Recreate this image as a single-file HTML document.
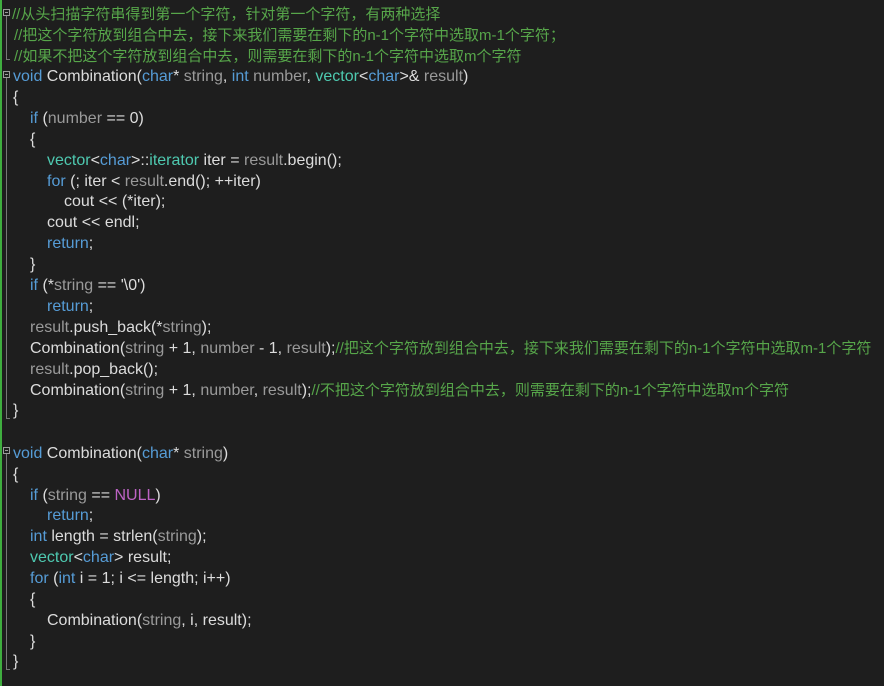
<!DOCTYPE html>
<html><head><meta charset="utf-8"><style>
body{margin:0;width:884px;height:686px;background:#1e1e1e;overflow:hidden;position:relative;font-family:"Liberation Sans","Noto Sans CJK SC",sans-serif;font-size:16px;color:#dcdcdc}
.g{position:absolute;left:0;top:0;width:2px;height:686px;background:#3fae3f}
.l{position:absolute;left:13px;white-space:pre;height:21px;line-height:21px;top:0}
.k{color:#569cd6}.c{color:#57a64a;font-size:15px}.p{color:#9a9a9a}.t{color:#4ec9b0}.m{color:#bd63c5}
.box{position:absolute;left:3px;width:7px;height:7px;border:1px solid #9a9a9a;box-sizing:border-box}
.box:after{content:"";position:absolute;left:1px;top:2px;width:3px;height:1px;background:#9a9a9a}
.v{position:absolute;left:6px;width:1px;background:#777}
.h{position:absolute;left:6px;width:4px;height:1px;background:#777}
</style></head><body>
<div class="g"></div>
<div class="box" style="top:9px"></div><div class="v" style="top:16px;height:44px"></div><div class="h" style="top:59px"></div>
<div class="box" style="top:71px"></div><div class="v" style="top:78px;height:341px"></div><div class="h" style="top:418px"></div>
<div class="box" style="top:447px"></div><div class="v" style="top:454px;height:216px"></div><div class="h" style="top:669px"></div>
<div class="l c" style="top:4px;left:12px">//从头扫描字符串得到第一个字符，针对第一个字符，有两种选择</div>
<div class="l c" style="top:25px;left:14px">//把这个字符放到组合中去，接下来我们需要在剩下的n-1个字符中选取m-1个字符；</div>
<div class="l c" style="top:46px;left:14px">//如果不把这个字符放到组合中去，则需要在剩下的n-1个字符中选取m个字符</div>
<div class="l" style="top:66px"><span class="k">void</span> Combination(<span class="k">char</span>* <span class="p">string</span>, <span class="k">int</span> <span class="p">number</span>, <span class="t">vector</span>&lt;<span class="k">char</span>&gt;&amp; <span class="p">result</span>)</div>
<div class="l" style="top:87px">{</div>
<div class="l" style="top:108px;left:30px"><span class="k">if</span> (<span class="p">number</span> == 0)</div>
<div class="l" style="top:129px;left:30px">{</div>
<div class="l" style="top:150px;left:47px"><span class="t">vector</span>&lt;<span class="k">char</span>&gt;::<span class="t">iterator</span> iter = <span class="p">result</span>.begin();</div>
<div class="l" style="top:171px;left:47px"><span class="k">for</span> (; iter &lt; <span class="p">result</span>.end(); ++iter)</div>
<div class="l" style="top:191px;left:64px">cout &lt;&lt; (*iter);</div>
<div class="l" style="top:212px;left:47px">cout &lt;&lt; endl;</div>
<div class="l" style="top:233px;left:47px"><span class="k">return</span>;</div>
<div class="l" style="top:254px;left:30px">}</div>
<div class="l" style="top:275px;left:30px"><span class="k">if</span> (*<span class="p">string</span> == '\0')</div>
<div class="l" style="top:296px;left:47px"><span class="k">return</span>;</div>
<div class="l" style="top:317px;left:30px"><span class="p">result</span>.push_back(*<span class="p">string</span>);</div>
<div class="l" style="top:338px;left:30px">Combination(<span class="p">string</span> + 1, <span class="p">number</span> - 1, <span class="p">result</span>);<span class="c">//把这个字符放到组合中去，接下来我们需要在剩下的n-1个字符中选取m-1个字符</span></div>
<div class="l" style="top:359px;left:30px"><span class="p">result</span>.pop_back();</div>
<div class="l" style="top:380px;left:30px">Combination(<span class="p">string</span> + 1, <span class="p">number</span>, <span class="p">result</span>);<span class="c">//不把这个字符放到组合中去，则需要在剩下的n-1个字符中选取m个字符</span></div>
<div class="l" style="top:400px">}</div>
<div class="l" style="top:443px"><span class="k">void</span> Combination(<span class="k">char</span>* <span class="p">string</span>)</div>
<div class="l" style="top:464px">{</div>
<div class="l" style="top:485px;left:30px"><span class="k">if</span> (<span class="p">string</span> == <span class="m">NULL</span>)</div>
<div class="l" style="top:505px;left:47px"><span class="k">return</span>;</div>
<div class="l" style="top:526px;left:30px"><span class="k">int</span> length = strlen(<span class="p">string</span>);</div>
<div class="l" style="top:547px;left:30px"><span class="t">vector</span>&lt;<span class="k">char</span>&gt; result;</div>
<div class="l" style="top:568px;left:30px"><span class="k">for</span> (<span class="k">int</span> i = 1; i &lt;= length; i++)</div>
<div class="l" style="top:589px;left:30px">{</div>
<div class="l" style="top:610px;left:47px">Combination(<span class="p">string</span>, i, result);</div>
<div class="l" style="top:631px;left:30px">}</div>
<div class="l" style="top:651px">}</div>
</body></html>
